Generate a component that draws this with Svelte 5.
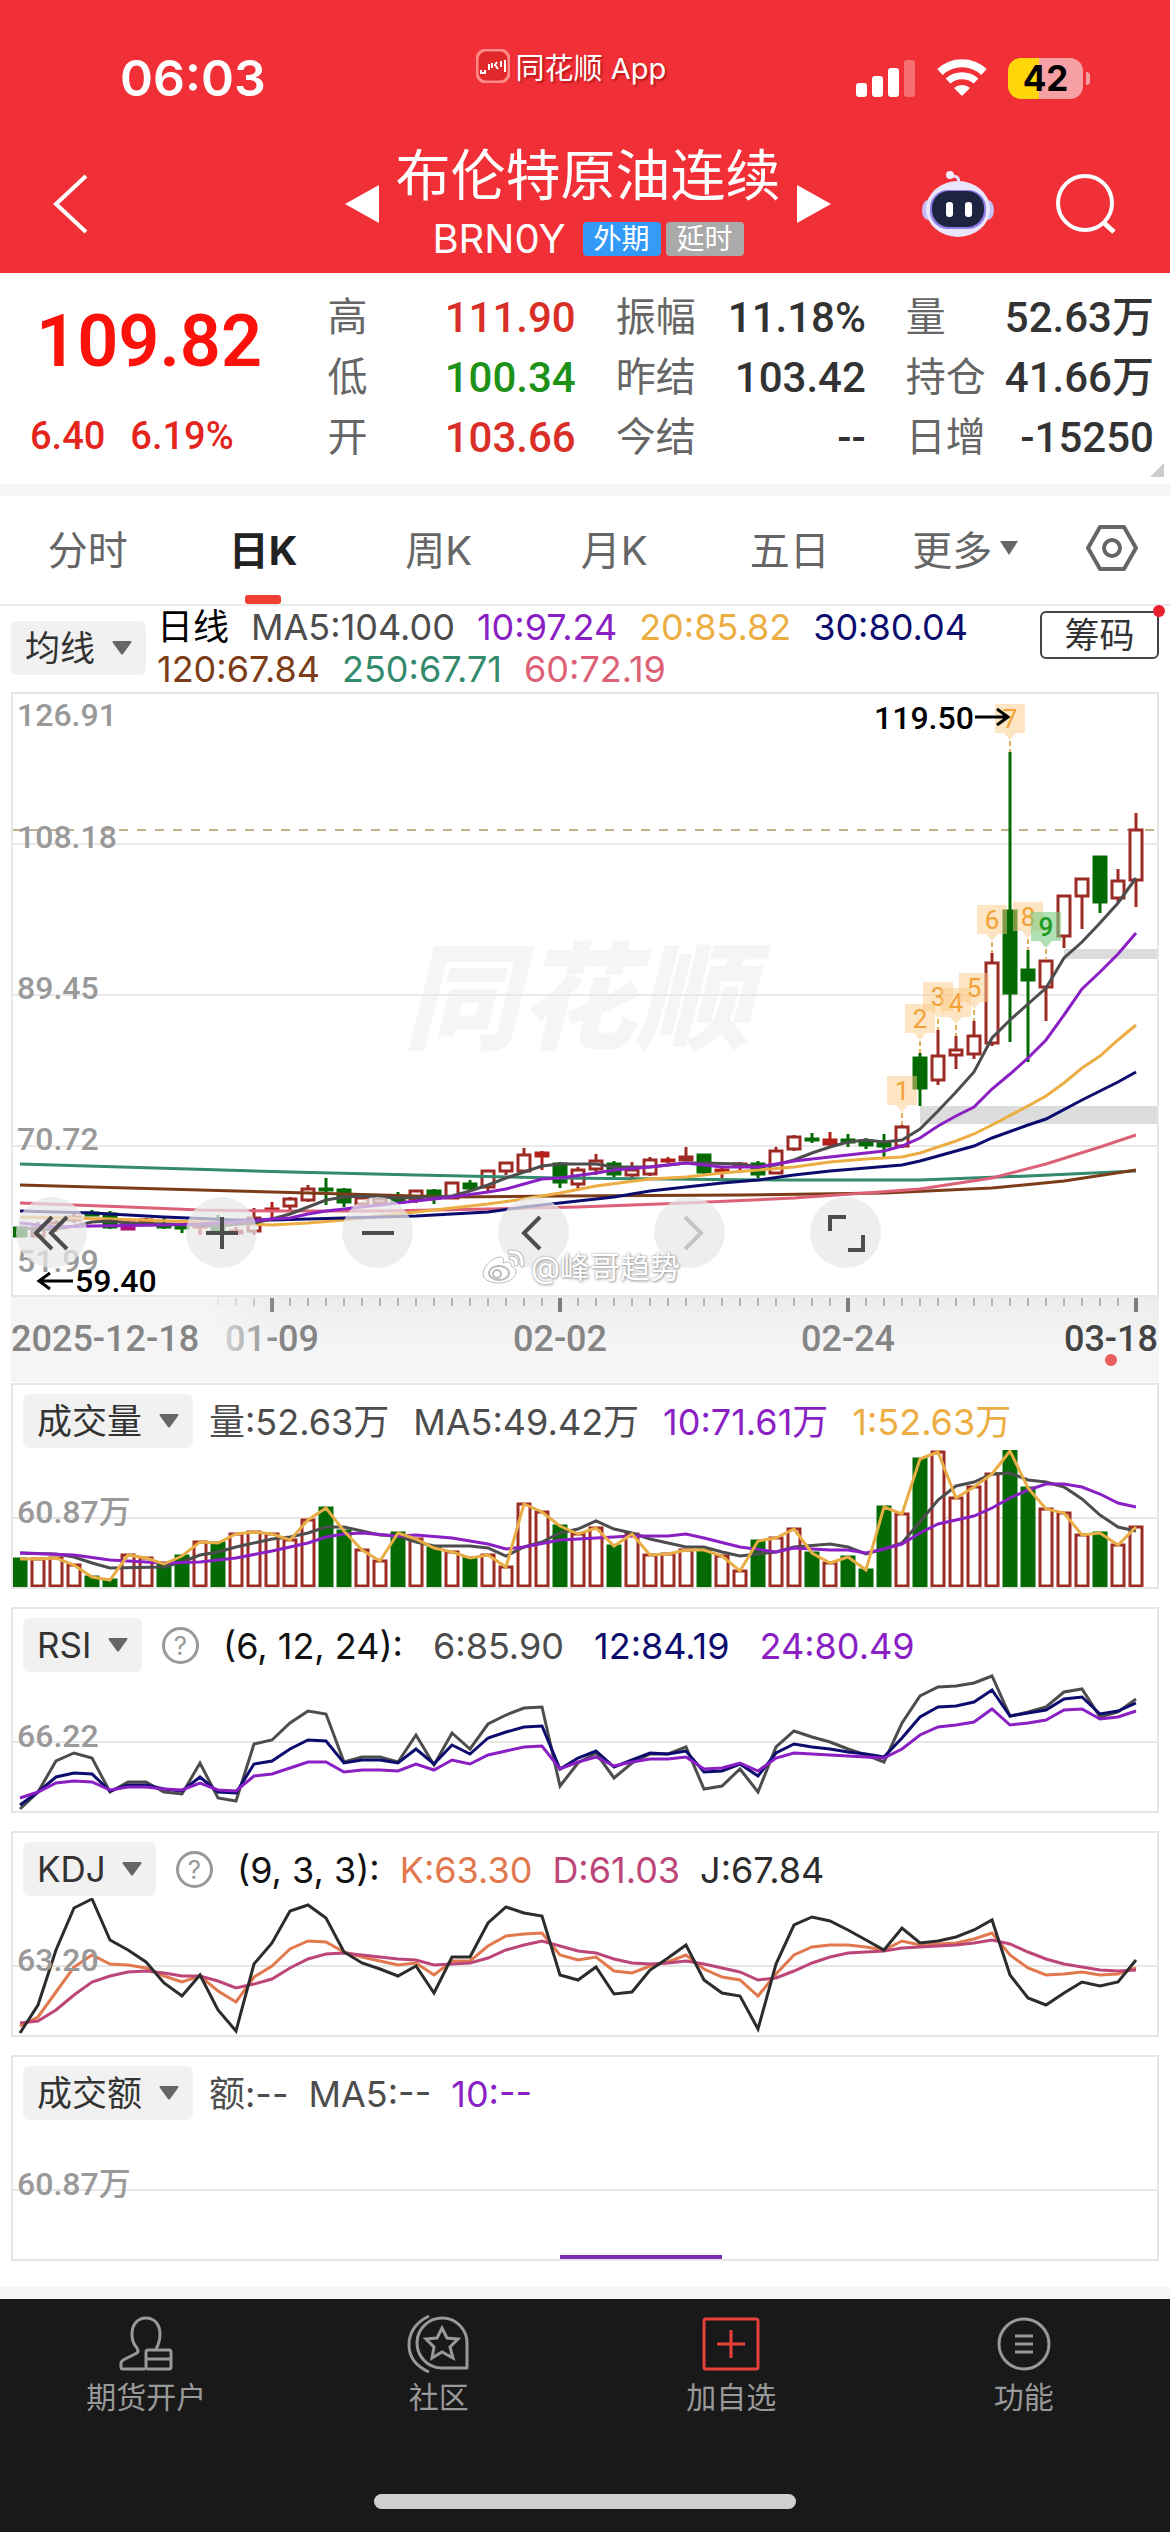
<script>
  const tabs = ["分时", "日K", "周K", "月K", "五日"];
  let tab = "日K";

  const quotes = [
    ["高", "111.90", "up"], ["振幅", "11.18%", ""], ["量", "52.63万", ""],
    ["低", "100.34", "down"], ["昨结", "103.42", ""], ["持仓", "41.66万", ""],
    ["开", "103.66", "up"], ["今结", "--", ""], ["日增", "-15250", ""],
  ];

  const averages = [
    [["日线", "#000"], ["MA5:104.00", "#4d4d4d"], ["10:97.24", "#8a1fc4"], ["20:85.82", "#ecae43"], ["30:80.04", "#0c0c6e"]],
    [["120:67.84", "#7c3c18"], ["250:67.71", "#338a6c"], ["60:72.19", "#dc6176"]],
  ];

  // kind, body top, body bottom, high, low
  const candles = [
    ["g", 535, 545, 535, 545], ["r", 535, 545, 530, 545], ["r", 530, 536, 528, 540],
    ["r", 524, 529, 522, 531], ["g", 520, 524, 518, 524], ["g", 521, 536, 519, 537],
    ["m", 530, 538, 528, 538], ["s", 527, 532, 526, 532], ["g", 532, 536, 524, 537],
    ["g", 534, 537, 532, 541], ["s", 533, 535, 532, 543], ["g", 531, 541, 523, 541],
    ["s", 538, 542, 535, 543], ["r", 525, 540, 516, 543], ["s", 516, 519, 510, 526],
    ["r", 506, 515, 505, 518], ["r", 496, 509, 493, 510], ["g", 496, 499, 486, 513],
    ["g", 497, 511, 496, 515], ["r", 505, 513, 504, 514], ["r", 506, 512, 505, 513],
    ["g", 506, 511, 500, 512], ["r", 498, 508, 498, 511], ["g", 498, 507, 497, 512],
    ["r", 490, 507, 490, 507], ["g", 491, 497, 488, 500], ["r", 478, 496, 478, 499],
    ["r", 470, 480, 470, 483], ["r", 462, 480, 456, 480], ["s", 460, 465, 459, 478],
    ["g", 471, 491, 470, 496], ["r", 477, 493, 475, 499], ["r", 468, 478, 462, 483],
    ["g", 471, 483, 469, 485], ["r", 477, 484, 470, 486], ["r", 467, 483, 465, 484],
    ["s", 467, 470, 465, 471], ["r", 464, 469, 455, 469], ["g", 462, 481, 462, 482],
    ["s", 477, 480, 474, 486], ["s", 471, 473, 470, 481], ["g", 471, 483, 469, 486],
    ["r", 458, 482, 455, 482], ["r", 444, 458, 443, 459], ["g", 446, 448, 441, 451],
    ["s", 447, 453, 440, 455], ["g", 447, 451, 442, 455], ["g", 448, 454, 446, 457],
    ["g", 451, 455, 442, 465], ["r", 434, 455, 433, 456], ["g", 365, 397, 361, 414],
    ["r", 363, 389, 338, 393], ["r", 357, 364, 344, 377], ["r", 343, 363, 329, 367],
    ["r", 270, 352, 261, 354], ["g", 218, 302, 60, 350], ["g", 277, 289, 258, 370],
    ["r", 268, 296, 268, 329], ["r", 203, 245, 203, 256], ["r", 186, 205, 186, 237],
    ["g", 164, 211, 164, 221], ["r", 188, 207, 177, 210], ["r", 137, 189, 121, 215],
  ];

  // index, y
  const priceLines = [
    ["#338a6c", [[0, 472], [15, 480], [22, 483], [30, 486], [42, 488], [50, 488], [56, 484], [62, 479]]],
    ["#7c3c18", [[0, 493], [12, 499], [16, 501], [20, 503], [24, 505], [30, 504], [40, 503], [48, 501], [54, 496], [58, 489], [62, 478]]],
    ["#dc6176", [[0, 511], [6, 515], [10, 518], [14, 519], [20, 519], [26, 517], [31, 515], [37, 511], [43, 506], [47, 501], [50, 497], [54, 486], [57, 472], [60, 455], [62, 443]]],
    ["#ecae43", [[0, 525], [5, 527], [10, 530], [14, 533], [16, 531], [18, 528], [20, 524], [22, 520], [24, 516], [26, 512], [28, 507], [30, 501], [32, 494], [35, 487], [37, 485], [39, 481], [41, 478], [43, 475], [45, 470], [47, 467], [49, 465], [50, 461], [51, 455], [52, 449], [53, 442], [54, 433], [56, 414], [57, 404], [58, 391], [59, 376], [60, 364], [61, 348], [62, 333]]],
    ["#0c0c6e", [[0, 519], [4, 521], [8, 525], [12, 528], [14, 528], [18, 526], [22, 524], [26, 520], [28, 515], [30, 511], [33, 505], [35, 499], [37, 495], [39, 491], [41, 488], [43, 483], [45, 479], [47, 476], [49, 473], [50, 469], [51, 464], [53, 454], [54, 446], [56, 433], [57, 427], [59, 408], [61, 390], [62, 380]]],
    ["#4d4d4d", [[0, 535], [1, 538], [2, 537], [3, 534], [4, 530], [5, 529], [6, 531], [8, 532], [11, 534], [13, 531], [14, 527], [15, 522], [16, 515], [17, 508], [18, 505], [19, 504], [21, 506], [23, 505], [24, 504], [25, 499], [26, 493], [27, 486], [28, 480], [29, 474], [30, 472], [32, 472], [33, 475], [35, 475], [37, 471], [38, 471], [40, 472], [41, 475], [42, 473], [43, 468], [44, 461], [45, 455], [46, 450], [47, 448], [48, 450], [49, 448], [50, 437], [51, 419], [52, 400], [53, 380], [54, 346], [55, 328], [56, 312], [57, 296], [58, 266], [59, 250], [60, 231], [61, 211], [62, 186]]],
    ["#8a1fc4", [[0, 531], [1, 533], [2, 535], [4, 534], [8, 533], [10, 532], [12, 530], [14, 527], [15, 526], [16, 522], [17, 519], [19, 515], [21, 511], [22, 509], [24, 505], [26, 500], [27, 497], [28, 492], [29, 487], [30, 486], [32, 481], [33, 478], [35, 475], [37, 471], [39, 475], [41, 475], [42, 472], [43, 469], [45, 465], [47, 461], [48, 459], [49, 454], [50, 446], [51, 434], [52, 424], [53, 415], [54, 397], [55, 382], [56, 366], [57, 348], [58, 323], [59, 297], [60, 280], [61, 262], [62, 241]]],
  ];

  // index, box top, number
  const marks = [[49, 384, 1], [50, 312, 2], [51, 290, 3], [52, 296, 4], [53, 281, 5], [54, 213, 6], [55, 12, 7], [56, 210, 8], [57, 220, 9]];
  const priceLabels = [["126.91", 34], ["108.18", 156], ["89.45", 307], ["70.72", 458], ["51.99", 580]];
  const dates = [["01-09", 14], ["02-02", 30], ["02-24", 46]];

  const volumes = [175, 175, 174, 181, 193, 196, 171, 174, 180, 172, 158, 159, 150, 148, 150, 156, 136, 124, 147, 166, 177, 149, 155, 164, 168, 174, 171, 183, 120, 128, 142, 150, 144, 162, 150, 171, 170, 166, 166, 172, 187, 157, 154, 145, 169, 179, 173, 186, 123, 130, 75, 68, 114, 103, 90, 67, 104, 125, 129, 151, 149, 161, 143];
  const downDays = [0, 4, 5, 8, 9, 11, 17, 18, 21, 23, 25, 30, 33, 38, 41, 44, 46, 47, 48, 50, 55, 56, 60];
  const volume5 = [[0, 170], [2, 171], [3, 174], [4, 180], [5, 185], [8, 184], [9, 179], [10, 172], [11, 169], [12, 164], [14, 156], [15, 154], [16, 150], [17, 144], [18, 144], [20, 152], [21, 153], [22, 159], [23, 163], [25, 163], [26, 165], [27, 173], [28, 164], [29, 159], [30, 150], [31, 146], [32, 138], [33, 146], [34, 150], [35, 156], [37, 164], [38, 164], [39, 169], [40, 173], [42, 169], [43, 164], [45, 161], [46, 164], [47, 171], [48, 166], [49, 160], [50, 139], [51, 117], [52, 103], [53, 99], [54, 91], [55, 90], [56, 97], [57, 99], [58, 104], [59, 116], [60, 132], [61, 144], [62, 148]];
  const volume10 = [[0, 170], [3, 172], [5, 177], [8, 180], [10, 179], [12, 175], [14, 168], [16, 160], [17, 154], [18, 151], [19, 150], [21, 153], [22, 152], [24, 155], [26, 161], [27, 166], [28, 164], [30, 157], [32, 155], [34, 153], [36, 153], [37, 151], [38, 155], [40, 164], [42, 169], [43, 165], [45, 167], [46, 167], [47, 170], [48, 166], [49, 161], [50, 150], [51, 141], [53, 133], [54, 125], [55, 115], [56, 107], [57, 101], [58, 101], [59, 104], [60, 111], [61, 120], [62, 124]];

  // kept at three steps per unit
  const rsi = [
    ["#4d4d4d", [627, 575, 482, 460, 473, 577, 545, 545, 575, 583, 488, 595, 602, 433, 420, 368, 334, 342, 487, 470, 470, 485, 405, 495, 400, 448, 373, 346, 325, 322, 558, 490, 458, 535, 490, 462, 463, 440, 568, 557, 507, 577, 440, 393, 410, 425, 447, 465, 485, 370, 288, 261, 257, 249, 227, 347, 335, 320, 275, 268, 350, 335, 297]],
    ["#0c0c6e", [615, 575, 530, 518, 523, 572, 555, 555, 568, 572, 530, 576, 580, 493, 484, 448, 421, 424, 488, 480, 480, 488, 447, 492, 436, 461, 415, 396, 380, 378, 508, 475, 453, 500, 480, 460, 463, 452, 517, 513, 492, 527, 460, 433, 441, 447, 457, 463, 470, 415, 352, 321, 317, 307, 270, 348, 340, 330, 296, 291, 342, 332, 310]],
    ["#8a1fc4", [594, 577, 550, 543, 547, 570, 562, 562, 567, 570, 550, 570, 573, 528, 523, 503, 485, 487, 515, 511, 511, 514, 492, 510, 481, 492, 465, 452, 440, 438, 507, 487, 470, 498, 487, 476, 477, 471, 507, 503, 490, 512, 475, 458, 462, 465, 468, 471, 474, 448, 405, 380, 376, 367, 328, 375, 369, 360, 331, 326, 357, 350, 334]],
  ];
  const kdj = [
    ["#e2784e", [617, 590, 515, 440, 405, 432, 435, 443, 467, 487, 468, 512, 546, 472, 438, 387, 364, 366, 397, 410, 422, 434, 428, 465, 423, 422, 378, 348, 343, 339, 405, 421, 412, 453, 458, 437, 425, 405, 448, 470, 480, 527, 462, 405, 381, 374, 376, 382, 391, 364, 375, 373, 368, 356, 340, 405, 443, 464, 462, 457, 465, 463, 443]],
    ["#bd4678", [610, 603, 570, 525, 487, 467, 457, 453, 458, 468, 468, 483, 503, 493, 476, 445, 418, 401, 400, 405, 411, 418, 421, 436, 432, 429, 413, 391, 376, 364, 378, 392, 399, 417, 430, 432, 429, 423, 431, 443, 456, 480, 475, 452, 428, 410, 400, 395, 393, 384, 381, 379, 375, 369, 359, 373, 397, 418, 433, 441, 450, 454, 450]],
    ["#2c2c2c", [640, 555, 390, 265, 238, 360, 390, 425, 490, 527, 465, 570, 632, 432, 370, 273, 255, 295, 397, 430, 448, 467, 438, 520, 410, 410, 310, 262, 278, 288, 465, 479, 440, 523, 515, 450, 415, 375, 480, 520, 528, 628, 432, 316, 290, 303, 330, 360, 391, 323, 368, 363, 350, 330, 299, 465, 535, 555, 520, 487, 498, 485, 421]],
  ];

  const indicators = [
    { name: "成交量", label: "60.87万", size: "medium", items: [["量:52.63万", "#4d4d4d"], ["MA5:49.42万", "#4d4d4d"], ["10:71.61万", "#8a1fc4"], ["1:52.63万", "#ecae43"]] },
    { name: "RSI", label: "66.22", help: true, size: "wide", lines: rsi, shift: 7, items: [["(6, 12, 24):", "#111"], ["6:85.90", "#4d4d4d"], ["12:84.19", "#0c0c6e"], ["24:80.49", "#8a1fc4"]] },
    { name: "KDJ", label: "63.20", help: true, size: "", lines: kdj, shift: 11, items: [["(9, 3, 3):", "#111"], ["K:63.30", "#e2784e"], ["D:61.03", "#bd4678"], ["J:67.84", "#2c2c2c"]] },
    { name: "成交额", label: "60.87万", size: "", items: [["额:--", "#4d4d4d"], ["MA5:--", "#4d4d4d"], ["10:--", "#8a1fc4"]] },
  ];

  const fill = { g: "#046a04", r: "#fff", s: "#d0201a", m: "#b0107c" };
  const stroke = { g: "#046a04", r: "#9c2b25", s: "#b3201a", m: "#b0107c" };

  const x = (i) => 9 + i * 18;
  const line = (pts) => pts.map(([i, y]) => `${x(i)},${y}`).join(" ");
  const series = (ys, shift) => ys.map((y, i) => `${x(i)},${Math.round(y / 3) - shift}`).join(" ");
</script>

<div class="page">
  <header>
    <div class="status">
      <span class="time">06:03</span>
      <span class="app">
        <svg width="34" height="34" viewBox="0 0 34 34">
          <rect x="1" y="1" width="32" height="32" rx="9" fill="#e0282b" stroke="#ff8a86" stroke-width="3" />
          <path d="M5 21v3h4v-3M13 15v6M16 14v5M21 13l-2 3 3 4M25 12v6M29 11v12" fill="none" stroke="#fff" stroke-width="2" />
        </svg>
        同花顺 App
      </span>
      <span class="system">
        <svg width="60" height="38" viewBox="0 0 60 38" fill="#fff">
          <rect x="0" y="24" width="11" height="14" rx="3" />
          <rect x="16" y="17" width="11" height="21" rx="3" />
          <rect x="32" y="9" width="11" height="29" rx="3" />
          <rect x="48" y="1" width="11" height="37" rx="3" opacity=".3" />
        </svg>
        <svg width="50" height="38" viewBox="0 0 50 38" fill="none" stroke="#fff">
          <path d="M3 13a32 32 0 0 1 44 0" stroke-width="8" />
          <path d="M11 22a21 21 0 0 1 28 0" stroke-width="7" />
          <path d="M25 37l-8-8a12 12 0 0 1 16 0z" fill="#fff" stroke="none" />
        </svg>
        <span class="battery">42</span>
      </span>
    </div>
    <div class="title">
      <button class="back" aria-label="返回">
        <svg width="36" height="60" viewBox="0 0 36 60"><path d="M33 2L3 30l30 28" fill="none" stroke="#fff" stroke-width="4" /></svg>
      </button>
      <div class="symbol">
        <button aria-label="上一个"><svg width="34" height="38" viewBox="0 0 34 38"><path d="M34 0v38L0 19z" fill="#fff" /></svg></button>
        <div>
          <h1>布伦特原油连续</h1>
          <p>BRN0Y <span class="tag">外期</span><span class="tag delay">延时</span></p>
        </div>
        <button aria-label="下一个"><svg width="34" height="38" viewBox="0 0 34 38"><path d="M0 0v38l34-19z" fill="#fff" /></svg></button>
      </div>
      <div class="tools">
        <button aria-label="助手">
          <svg width="72" height="68" viewBox="0 0 72 68">
            <path d="M36 14c2-6-1-8-6-8" fill="none" stroke="#e8defa" stroke-width="3" />
            <circle cx="28" cy="5" r="4" fill="#f2ecff" />
            <ellipse cx="6" cy="40" rx="6" ry="10" fill="#c9bdf5" />
            <ellipse cx="66" cy="40" rx="6" ry="10" fill="#c9bdf5" />
            <ellipse cx="36" cy="39" rx="32" ry="28" fill="#e9e6fb" />
            <rect x="8" y="20" width="56" height="39" rx="18" fill="#8e7be8" />
            <rect x="10" y="21" width="52" height="36" rx="17" fill="#1d2440" />
            <rect x="24" y="32" width="7" height="15" rx="3" fill="#fff" />
            <rect x="43" y="32" width="7" height="15" rx="3" fill="#fff" />
          </svg>
        </button>
        <button aria-label="搜索">
          <svg width="60" height="60" viewBox="0 0 60 60" fill="none" stroke="#fff" stroke-width="4">
            <circle cx="29" cy="29" r="27" /><path d="M47 48l11 10" stroke-width="5" />
          </svg>
        </button>
      </div>
    </div>
  </header>

  <section class="quote">
    <div class="last">
      <strong>109.82</strong>
      <span><b>6.40</b><b>6.19%</b></span>
    </div>
    <dl>
      {#each quotes as [name, value, dir]}
        <div><dt>{name}</dt><dd class={dir}>{value}</dd></div>
      {/each}
    </dl>
    <i class="corner"></i>
  </section>

  <nav class="tabs">
    {#each tabs as t}
      <button class:active={t === tab} on:click={() => (tab = t)}>{t}</button>
    {/each}
    <button class="more">更多 <svg width="18" height="14" viewBox="0 0 18 14"><path d="M0 0h18L9 14z" fill="#666" /></svg></button>
    <button aria-label="设置">
      <svg width="52" height="48" viewBox="0 0 52 48" fill="none" stroke="#666" stroke-width="4">
        <path d="M14 3h24l12 21-12 21H14L2 24z" stroke-linejoin="round" /><circle cx="26" cy="24" r="8" />
      </svg>
    </button>
  </nav>

  <section class="averages">
    <label class="picker">
      <select aria-label="主图指标"><option>均线</option></select>
      <svg width="20" height="14" viewBox="0 0 20 14"><path d="M1 0h18q1 1 0 2l-8 11q-1 1-2 0L1 2q-1-1 0-2" fill="#666" /></svg>
    </label>
    <div class="values">
      {#each averages as row}
        <p>{#each row as [text, color]}<span style:color>{text}</span>{/each}</p>
      {/each}
    </div>
    <button class="chips">筹码</button>
  </section>

  <section class="chart">
    <svg viewBox="2 2 1144 601">
      <text x="392" y="348" class="brand">同花顺</text>
      {#each [152, 303, 454] as y}
        <path d="M0 {y}H1148" stroke="#e9e9e9" stroke-width="2" />
      {/each}
      <path d="M0 138H1148" stroke="#c4b28e" stroke-width="2" stroke-dasharray="9 9" />
      <rect x="909" y="414" width="240" height="18" fill="#dcdcdc" />
      <rect x="1053" y="257" width="96" height="10" fill="#dcdcdc" />
      {#each priceLabels as [text, y]}
        <text x="6" {y} class="scale">{text}</text>
      {/each}
      {#each candles as [kind, top, bottom, high, low], i}
        <path d="M{x(i)} {high}V{low}" stroke={stroke[kind]} stroke-width="3" />
        <rect x={x(i) - 6} y={top + 1} width="12" height={Math.max(bottom - top - 2, 1)} fill={fill[kind]} stroke={stroke[kind]} stroke-width="3" />
      {/each}
      {#each priceLines as [color, pts]}
        <polyline points={line(pts)} fill="none" stroke={color} stroke-width="3" />
      {/each}
      {#each marks as [i, y, n]}
        <g class="mark" class:last-mark={n === 9}>
          <path d="M{x(i) - 15} {y}h30v29h-9l-6 7-6-7h-9z" />
          <path class="stem" d="M{x(i)} {y + 37}V{candles[i][3]}" />
          <text x={x(i)} y={y + 24}>{n}</text>
        </g>
      {/each}
      <g class="extreme">
        <text x="863" y="37">119.50</text>
        <path d="M964 25h32M986 17l11 8-11 8" />
        <text x="64" y="600">59.40</text>
        <path d="M62 589H29M39 581l-11 8 11 8" />
      </g>
    </svg>
    <div class="controls">
      <button aria-label="最早"><svg width="40" height="40" viewBox="0 0 40 40"><path d="M20 4L4 20l16 16M35 4L19 20l16 16" /></svg></button>
      <button aria-label="放大"><svg width="40" height="40" viewBox="0 0 40 40"><path d="M4 20h32M20 4v32" /></svg></button>
      <button aria-label="缩小"><svg width="40" height="40" viewBox="0 0 40 40"><path d="M4 20h32" /></svg></button>
      <button aria-label="左移"><svg width="40" height="40" viewBox="0 0 40 40"><path d="M26 4L10 20l16 16" /></svg></button>
      <button aria-label="右移" disabled><svg width="40" height="40" viewBox="0 0 40 40"><path d="M15 4l16 16-16 16" /></svg></button>
      <button aria-label="全屏"><svg width="40" height="40" viewBox="0 0 40 40"><path d="M4 18V4h16M22 37h15V22" /></svg></button>
    </div>
    <p class="credit">
      <svg width="44" height="38" viewBox="0 0 44 38">
        <path d="M1 26c0-8 10-17 17-17 4 0 4 3 3 6 5-2 9-1 8 3 3 1 5 3 5 6 0 7-9 11-17 11S1 32 1 26z" fill="#fff" stroke="#bbb" />
        <ellipse cx="17" cy="25" rx="10" ry="7" fill="none" stroke="#bbb" stroke-width="2" />
        <circle cx="15" cy="26" r="4" fill="none" stroke="#bbb" stroke-width="2" />
        <path d="M28 4q13-1 12 13M29 10q6 0 5 6" fill="none" stroke="#bbb" stroke-width="5" stroke-linecap="round" />
        <path d="M28 4q13-1 12 13M29 10q6 0 5 6" fill="none" stroke="#fff" stroke-width="3" stroke-linecap="round" />
      </svg>
      @峰哥趋势
    </p>
  </section>

  <svg class="axis" viewBox="0 0 1148 85">
    <defs>
      <linearGradient id="shade" x2="0" y2="1"><stop stop-color="#ececec" /><stop offset=".6" stop-color="#f5f5f5" /></linearGradient>
      <linearGradient id="fade"><stop offset=".7" stop-color="#f5f5f5" /><stop offset="1" stop-color="#f5f5f5" stop-opacity="0" /></linearGradient>
    </defs>
    <rect width="1148" height="85" fill="url(#shade)" />
    {#each candles.slice(11) as _, i}
      <path d="M{x(i + 11)} 1v{i % 16 === 3 ? 14 : 8}" stroke={i % 16 === 3 ? "#7c7c7c" : "#b4b4b4"} stroke-width={i % 16 === 3 ? 4 : 2} />
    {/each}
    {#each dates as [text, i]}
      <text x={x(i)} y="54" text-anchor="middle">{text}</text>
    {/each}
    <rect width="270" height="85" fill="url(#fade)" />
    <text x="0" y="54">2025-12-18</text>
    <text x="1147" y="54" text-anchor="end" class="today">03-18</text>
    <circle cx="1100" cy="63" r="6" fill="#e85f5f" />
  </svg>

  {#each indicators as panel, p}
    <section class="panel">
      <div class="legend {panel.size}">
        <label class="picker">
          <select aria-label="副图指标"><option>{panel.name}</option></select>
          <svg width="20" height="14" viewBox="0 0 20 14"><path d="M1 0h18q1 1 0 2l-8 11q-1 1-2 0L1 2q-1-1 0-2" fill="#666" /></svg>
        </label>
        {#if panel.help}
          <button class="help" aria-label="说明">?</button>
        {/if}
        <p>{#each panel.items as [text, color]}<span style:color>{text}</span>{/each}</p>
      </div>
      <svg viewBox="2 67 1144 137">
        <path d="M0 135H1148" stroke="#e6e6e6" stroke-width="2" />
        {#if p !== 2}<text x="6" y="140" class="scale">{panel.label}</text>{/if}
        {#if p === 0}
          {#each volumes as v, i}
            {@const down = downDays.includes(i)}
            <rect x={x(i) - 6} y={v + 1} width="12" height={202 - v} fill={down ? "#046a04" : "#fff"} stroke={down ? "#046a04" : "#9c2b25"} stroke-width="3" />
          {/each}
          <polyline points={line(volume5)} fill="none" stroke="#4d4d4d" stroke-width="3" />
          <polyline points={line(volume10)} fill="none" stroke="#8a1fc4" stroke-width="3" />
          <polyline points={line(volumes.map((v, i) => [i, v + 1]))} fill="none" stroke="#e9ad45" stroke-width="3" />
        {:else if p === 3}
          <path d="M549 202H711" stroke="#7b2cb4" stroke-width="4" />
        {:else}
          {#each panel.lines as [color, ys]}
            <polyline points={series(ys, panel.shift)} fill="none" stroke={color} stroke-width="3" />
          {/each}
        {/if}
        {#if p === 2}<text x="6" y="140" class="scale">{panel.label}</text>{/if}
      </svg>
    </section>
  {/each}

  <footer>
    <nav>
      <a href="#account">
        <svg width="56" height="56" viewBox="0 0 56 56">
          <path d="M27 53H5q-2 0-2-2v-4q0-2 4-4l12-6q2-2 0-5-5-5-5-14C14 8 20 2 28 2s14 6 14 16q0 8-4 15" />
          <rect x="28" y="34" width="25" height="19" rx="2" /><path d="M28 43h25" />
        </svg>
        期货开户
      </a>
      <a href="#community">
        <svg width="64" height="60" viewBox="0 0 64 60">
          <path d="M22 2Q2 12 2 31q0 18 20 27" />
          <path d="M60 54H34A25 25 0 1 1 60 30z" stroke-linejoin="round" />
          <path d="M35 14l5 10 11 1-8 8 3 11-11-6-10 6 2-11-8-8 11-1z" />
        </svg>
        社区
      </a>
      <a href="#favorite" class="add">
        <svg width="60" height="56" viewBox="0 0 60 56"><rect x="3" y="3" width="54" height="50" rx="2" /><path d="M16 28h28M30 14v28" /></svg>
        加自选
      </a>
      <a href="#functions">
        <svg width="56" height="56" viewBox="0 0 56 56"><circle cx="28" cy="28" r="25" /><path d="M19 20h18M19 28h18M19 36h18" /></svg>
        功能
      </a>
    </nav>
    <div class="home"></div>
  </footer>
</div>

<style>
  :global(body) {
    background: #fff;
    font-family: Inter, "Noto Sans CJK SC", sans-serif;
  }
  .page {
    color: #333;
  }
  p, h1, dl, dd {
    margin: 0;
  }
  button, select {
    padding: 0;
    border: 0;
    background: none;
    color: inherit;
    font: inherit;
    line-height: inherit;
    appearance: none;
  }
  svg {
    display: block;
    flex: none;
  }
  header {
    color: #fff;
    background: #f03036;
    padding-bottom: 6px;
  }
  .status {
    display: grid;
    grid-template-columns: 44% 1fr auto;
    height: 140px;
    padding-right: 80px;
  }
  .time {
    padding: 46px 0 0 120px;
    font-size: 50px;
    font-weight: 600;
    line-height: 64px;
  }
  .app {
    display: flex;
    align-items: center;
    gap: 6px;
    height: 132px;
    margin-left: -4px;
    font-size: 29px;
    text-shadow: 2px 2px 2px #8008;
  }
  .system {
    display: flex;
    align-items: center;
    gap: 21px;
    height: 156px;
  }
  .battery {
    position: relative;
    width: 75px;
    margin-right: 7px;
    border-radius: 13px;
    background: linear-gradient(90deg, #ffd60a 42%, #f7a0a3 42%);
    color: #000;
    font-size: 35px;
    font-weight: 700;
    line-height: 41px;
    text-align: center;
  }
  .battery::after {
    content: "";
    position: absolute;
    top: 14px;
    right: -7px;
    width: 4px;
    height: 13px;
    border-radius: 0 4px 4px 0;
    background: #f7a0a3;
  }
  .title {
    display: grid;
    grid-template-columns: 1fr auto 1fr;
    align-items: center;
  }
  .back {
    justify-self: start;
    margin-left: 53px;
  }
  .symbol {
    display: flex;
    align-items: center;
    gap: 16px;
    padding-left: 6px;
  }
  .symbol div {
    text-align: center;
  }
  h1 {
    font-size: 55px;
    font-weight: 400;
    line-height: 70px;
  }
  .symbol p {
    display: flex;
    align-items: center;
    justify-content: center;
    gap: 5px;
    font-size: 40px;
    line-height: 57px;
  }
  .tag {
    width: 78px;
    margin-left: 12px;
    border-radius: 4px;
    background: #339bf7;
    font-size: 28px;
    line-height: 34px;
  }
  .delay {
    margin-left: 0;
    background: #aaa;
  }
  .tools {
    display: flex;
    align-items: center;
    justify-content: flex-end;
    gap: 62px;
    padding-right: 54px;
  }
  .quote {
    display: flex;
    position: relative;
    height: 211px;
    border-bottom: 12px solid #f5f5f5;
    font-family: Roboto, "Noto Sans CJK SC", sans-serif;
    font-weight: 500;
  }
  .last {
    width: 28%;
    padding-top: 24px;
    box-sizing: border-box;
    color: #e3251d;
    font-size: 38px;
  }
  .last strong {
    display: block;
    padding-left: 36px;
    color: #fb130b;
    font-size: 72px;
    font-weight: 600;
    line-height: 90px;
  }
  .last span {
    display: flex;
    gap: 25px;
    padding-left: 30px;
    line-height: 98px;
  }
  .last b {
    font-weight: 500;
  }
  dl {
    flex: 1;
    display: grid;
    grid-template-columns: 248fr 250fr 248fr;
    column-gap: 40px;
    align-content: start;
    padding: 15px 16px 0 0;
    font-size: 42px;
    line-height: 60px;
  }
  dl div {
    display: flex;
    justify-content: space-between;
    white-space: nowrap;
  }
  dt {
    color: #666;
    font-size: 40px;
    font-weight: 400;
  }
  .up {
    color: #da2f27;
  }
  .down {
    color: #1d9118;
  }
  .corner {
    position: absolute;
    right: 6px;
    bottom: 7px;
    border: solid transparent;
    border-width: 14px 0 0 14px;
    border-bottom: 14px solid #ccc;
    border-top: 0;
  }
  .tabs {
    display: grid;
    grid-template-columns: repeat(6, 15%) 1fr;
    align-items: center;
    height: 108px;
    border-bottom: 2px solid #eaeaea;
    color: #666;
    font-size: 40px;
  }
  .tabs button {
    display: flex;
    align-items: center;
    justify-content: center;
    position: relative;
    height: 108px;
    padding-bottom: 5px;
    box-sizing: border-box;
  }
  .tabs .active {
    color: #222;
    font-weight: 700;
  }
  .tabs .active::after {
    content: "";
    position: absolute;
    bottom: 0;
    width: 36px;
    height: 9px;
    border-radius: 3px;
    background: #f23d33;
  }
  .more {
    gap: 8px;
  }
  .averages {
    display: flex;
    align-items: flex-start;
    height: 86px;
    padding: 0 11px;
    font-size: 36px;
  }
  .picker {
    display: flex;
    align-items: center;
    gap: 16px;
    height: 54px;
    padding: 0 14px;
    border-radius: 6px;
    background: #f1f1f1;
    color: #333;
    font-size: 35px;
  }
  .averages .picker {
    margin-top: 15px;
  }
  .values {
    flex: 1;
    padding-left: 11px;
    line-height: 42px;
  }
  .values p {
    display: flex;
    align-items: baseline;
    gap: 22px;
    height: 42px;
    white-space: nowrap;
  }
  .chips {
    position: relative;
    width: 119px;
    height: 48px;
    margin-top: 5px;
    border: 2px solid #444;
    border-radius: 6px;
    font-size: 35px;
    line-height: 42px;
  }
  .chips::after {
    content: "";
    position: absolute;
    top: -8px;
    right: -8px;
    width: 12px;
    height: 12px;
    border-radius: 50%;
    background: #e8202c;
  }
  .chart, .panel {
    position: relative;
    margin: 0 11px;
    border: 2px solid #e6e6e6;
  }
  .chart > svg, .panel > svg {
    width: 100%;
  }
  svg text {
    font-family: Roboto, "Noto Sans CJK SC", sans-serif;
    font-size: 32px;
    font-weight: 500;
  }
  .scale {
    fill: #999;
  }
  svg .brand {
    fill: #f5f5f5;
    font-size: 116px;
    font-style: italic;
    font-weight: 900;
  }
  .mark path {
    fill: #fbc98680;
  }
  .mark .stem {
    stroke: #e0b060;
    stroke-width: 2;
    stroke-dasharray: 5 3;
  }
  svg .mark text {
    fill: #f3a137;
    font-size: 26px;
    font-weight: 400;
    text-anchor: middle;
  }
  .last-mark path {
    fill: #7ccc8299;
  }
  svg .last-mark text {
    fill: #1e9b22;
    font-weight: 500;
  }
  .extreme path {
    fill: none;
    stroke: #000;
    stroke-width: 3;
  }
  .controls {
    display: flex;
    gap: 85px;
    position: absolute;
    left: 3px;
    bottom: 27px;
  }
  .controls button {
    display: flex;
    align-items: center;
    justify-content: center;
    width: 71px;
    height: 71px;
    border-radius: 50%;
    background: #e8e8e8b8;
  }
  .controls button:first-child {
    margin-right: 14px;
  }
  .controls path {
    fill: none;
    stroke: #4d4d4d;
    stroke-width: 4;
  }
  .controls :disabled path {
    stroke: #c4c4c4;
  }
  .credit {
    display: flex;
    align-items: center;
    gap: 5px;
    position: absolute;
    left: 41%;
    bottom: 6px;
    color: #fff;
    font-size: 30px;
    line-height: 44px;
    text-shadow: 0 0 2px #999, 1px 1px 3px #999;
  }
  .axis {
    width: calc(100% - 22px);
    margin: 0 11px 1px;
  }
  .axis text {
    fill: #858585;
    font-size: 36px;
  }
  .axis .today {
    fill: #444;
  }
  .panel {
    margin-bottom: 18px;
  }
  .legend {
    display: flex;
    align-items: center;
    height: 54px;
    padding: 9px 0 2px 10px;
    white-space: nowrap;
  }
  .legend p {
    display: flex;
    align-items: baseline;
    gap: 20px;
    height: 54px;
    padding-left: 16px;
    font-size: 36px;
    line-height: 56px;
  }
  .medium p {
    gap: 24px;
  }
  .wide p {
    gap: 30px;
  }
  .help {
    width: 37px;
    height: 37px;
    margin: 0 8px 0 20px;
    border: 3px solid #999;
    border-radius: 50%;
    color: #999;
    font-size: 26px;
    line-height: 31px;
  }
  footer {
    height: 234px;
    margin-top: 26px;
    border-top: 12px solid #f5f5f5;
    background: #191919;
  }
  footer nav {
    display: grid;
    grid-template-columns: repeat(4, 1fr);
    height: 195px;
  }
  footer a {
    display: flex;
    flex-direction: column;
    align-items: center;
    padding-top: 15px;
    color: #999;
    font-size: 30px;
    line-height: 46px;
    text-decoration: none;
  }
  footer a svg {
    height: 60px;
  }
  footer path, footer rect, footer circle {
    fill: none;
    stroke: #999;
    stroke-width: 3;
  }
  .add path, .add rect {
    stroke: #e8403c;
  }
  .home {
    width: 36%;
    height: 15px;
    margin: 0 auto;
    border-radius: 8px;
    background: #cfcfcf;
  }
</style>
